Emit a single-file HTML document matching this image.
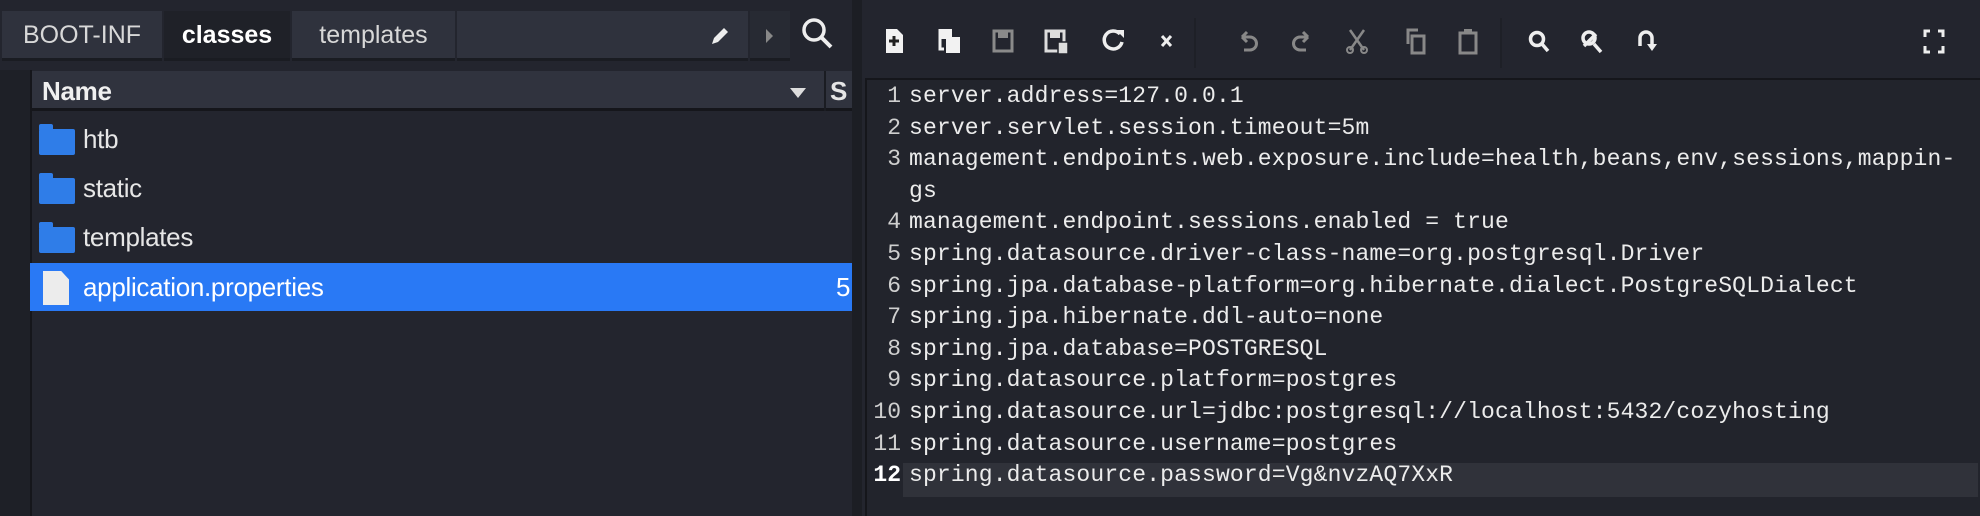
<!DOCTYPE html>
<html><head><meta charset="utf-8"><style>
*{margin:0;padding:0;box-sizing:border-box}
body{width:1980px;height:516px;background:#23252e;overflow:hidden;position:relative;font-family:"Liberation Sans",sans-serif;color:#e6e6e6}
.abs{position:absolute}
.tab{position:absolute;top:11px;height:50px;background:#2f323d;border-bottom:3px solid #1a1c22;font-size:25px;line-height:48px;color:#d8d8d8;text-align:center}
.row{position:absolute;left:30px;width:822px;height:48px;font-size:26px;line-height:48px;letter-spacing:-0.3px}
.fold{position:absolute;left:9px;top:14px;width:36px;height:26px;background:#2f7de8;border-radius:2px}
.fold:before{content:"";position:absolute;left:0;top:-5px;width:14px;height:6px;background:#2f7de8;border-radius:2px 2px 0 0}
.ed{position:absolute;left:865px;top:78px;width:1115px;height:438px;background:#22242c;border-left:2px solid #15161b;border-top:2px solid #15161b}
.ln{position:absolute;left:0;width:1110px;height:32px;font-family:"Liberation Mono",monospace;font-size:23px;line-height:32px;color:#ececec;white-space:pre;letter-spacing:0.15px}
.ln b{display:inline-block;width:34px;text-align:right;font-weight:normal;color:#cfcfcf;margin-right:8px;letter-spacing:0}
</style></head><body>
<div class="abs" style="left:0;top:70px;width:30px;height:446px;background:#1e2027"></div>
<div class="abs" style="left:30px;top:70px;width:2px;height:446px;background:#15161b"></div>
<div class="tab" style="left:2px;width:160px">BOOT-INF</div>
<div class="tab" style="left:164px;width:126px;background:#1f2128;color:#fff;font-weight:bold">classes</div>
<div class="tab" style="left:292px;width:163px">templates</div>
<div class="tab" style="left:457px;width:291px"><svg class="abs" style="left:252px;top:14px" width="22" height="22" viewBox="0 0 22 22"><path d="M3 19l2-6 10-10 4 4-10 10z" fill="#eee"/></svg></div>
<div class="tab" style="left:750px;width:40px;background:#272a33"><svg class="abs" style="left:14px;top:17px" width="10" height="16"><path d="M2 1l7 7-7 7z" fill="#888"/></svg></div>
<svg class="abs" style="left:800px;top:16px" width="36" height="36" viewBox="0 0 36 36"><circle cx="14" cy="14" r="10" stroke="#eee" stroke-width="3.5" fill="none"/><path d="M21 21l10 10" stroke="#eee" stroke-width="4"/></svg>
<div class="abs" style="left:32px;top:71px;width:820px;height:40px;background:#30333e;border-bottom:3px solid #15161b"></div>
<div class="abs" style="left:42px;top:76px;font-size:26px;font-weight:bold;line-height:30px;color:#f0f0f0;letter-spacing:-0.3px">Name</div>
<svg class="abs" style="left:790px;top:88px" width="16" height="10"><path d="M0 0h16L8 10z" fill="#ddd"/></svg>
<div class="abs" style="left:824px;top:71px;width:2px;height:40px;background:#1a1c22"></div>
<div class="abs" style="left:830px;top:76px;font-size:26px;font-weight:bold;line-height:30px">S</div>
<div class="row" style="top:115px"><div class="fold"></div><span class="abs" style="left:53px">htb</span></div>
<div class="row" style="top:164px"><div class="fold"></div><span class="abs" style="left:53px">static</span></div>
<div class="row" style="top:213px"><div class="fold"></div><span class="abs" style="left:53px">templates</span></div>
<div class="row" style="top:263px;background:#2979f5;color:#fff"><div class="abs" style="left:13px;top:8px;width:26px;height:34px;background:#ececec;clip-path:polygon(0 0,70% 0,100% 25%,100% 100%,0 100%)"></div><span class="abs" style="left:53px">application.properties</span><span class="abs" style="left:806px">5</span></div>
<div class="abs" style="left:852px;top:0;width:10px;height:516px;background:#1c1e24"></div>
<div class="abs" style="left:1194px;top:18px;width:2px;height:50px;background:#1e2027"></div>
<div class="abs" style="left:1500px;top:18px;width:2px;height:50px;background:#1e2027"></div>
<svg class="abs" style="left:880px;top:26px" width="1080" height="30" viewBox="0 0 1080 30" fill="none" stroke-width="3">
<path d="M6 3h11l6 6v18H6z" fill="#f2f2f2" stroke="none"/><path d="M14 10v10M9 15h10" stroke="#222"/>
<path d="M60 3h12v8h8v16H66V13h-6z" fill="#f2f2f2" stroke="none"/><path d="M60 3v20h4" stroke="#f2f2f2"/>
<rect x="114" y="5" width="18" height="20" stroke="#8a8a8a" stroke-width="3"/><rect x="118" y="6" width="10" height="6" fill="#8a8a8a" stroke="none"/>
<rect x="166" y="5" width="18" height="20" stroke="#ddd" stroke-width="3"/><rect x="170" y="6" width="10" height="6" fill="#ddd" stroke="none"/><rect x="178" y="16" width="10" height="12" fill="#ddd" stroke="#22242c" stroke-width="1.5"/>
<path d="M240 8a9 9 0 1 0 2 8" stroke="#eee" stroke-width="3.5"/><path d="M236 4h8v8z" fill="#eee" stroke="none"/>
<path d="M282 10l9 10M291 10l-9 10" stroke="#eee" stroke-width="3"/>
<path d="M362 11h8a6 6 0 0 1 0 13h-6M362 11l5-5M362 11l5 5" stroke="#888"/>
<path d="M428 11h-8a6 6 0 0 0 0 13h6M428 11l-5-5M428 11l-5 5" stroke="#888"/>
<path d="M470 4l14 20M484 4l-14 20" stroke="#888" stroke-width="2.5"/><circle cx="470" cy="24" r="3" stroke="#888" stroke-width="2"/><circle cx="484" cy="24" r="3" stroke="#888" stroke-width="2"/>
<path d="M528 18V4h10M532 10h12v17h-12z" stroke="#888"/>
<rect x="580" y="7" width="16" height="20" stroke="#888"/><rect x="584" y="3" width="8" height="5" fill="#888" stroke="none"/>
<circle cx="657" cy="13" r="6.5" stroke="#eee" stroke-width="3.5"/><path d="M662 18l6 7" stroke="#eee" stroke-width="3.5"/>
<circle cx="709" cy="12" r="6" stroke="#eee" stroke-width="3.5"/><path d="M704 20l12-12M714 18l7 8" stroke="#eee" stroke-width="3.5"/>
<path d="M760 20V12a6 6 0 0 1 12 0v6" stroke="#eee" stroke-width="3.5"/><path d="M767 18h10l-5 7z" fill="#eee" stroke="none"/>
<path d="M1050 5h-5v6M1058 5h5v6M1050 26h-5v-6M1058 26h5v-6" stroke="#eee" stroke-width="3"/>
</svg>
<div class="ed">
<div class="abs" style="left:36px;top:383px;width:1075px;height:34px;background:#30323a"></div>
<div class="ln" style="top:0"><b>1</b>server.address=127.0.0.1</div>
<div class="ln" style="top:31.6px"><b>2</b>server.servlet.session.timeout=5m</div>
<div class="ln" style="top:63.2px"><b>3</b>management.endpoints.web.exposure.include=health,beans,env,sessions,mappin-</div>
<div class="ln" style="top:94.8px"><b></b>gs</div>
<div class="ln" style="top:126.4px"><b>4</b>management.endpoint.sessions.enabled = true</div>
<div class="ln" style="top:158px"><b>5</b>spring.datasource.driver-class-name=org.postgresql.Driver</div>
<div class="ln" style="top:189.6px"><b>6</b>spring.jpa.database-platform=org.hibernate.dialect.PostgreSQLDialect</div>
<div class="ln" style="top:221.2px"><b>7</b>spring.jpa.hibernate.ddl-auto=none</div>
<div class="ln" style="top:252.8px"><b>8</b>spring.jpa.database=POSTGRESQL</div>
<div class="ln" style="top:284.4px"><b>9</b>spring.datasource.platform=postgres</div>
<div class="ln" style="top:316px"><b>10</b>spring.datasource.url=jdbc:postgresql://localhost:5432/cozyhosting</div>
<div class="ln" style="top:347.6px"><b>11</b>spring.datasource.username=postgres</div>
<div class="ln" style="top:379.2px"><b style="color:#fff;font-weight:bold">12</b>spring.datasource.password=Vg&amp;nvzAQ7XxR</div>
</div>
</body></html>
